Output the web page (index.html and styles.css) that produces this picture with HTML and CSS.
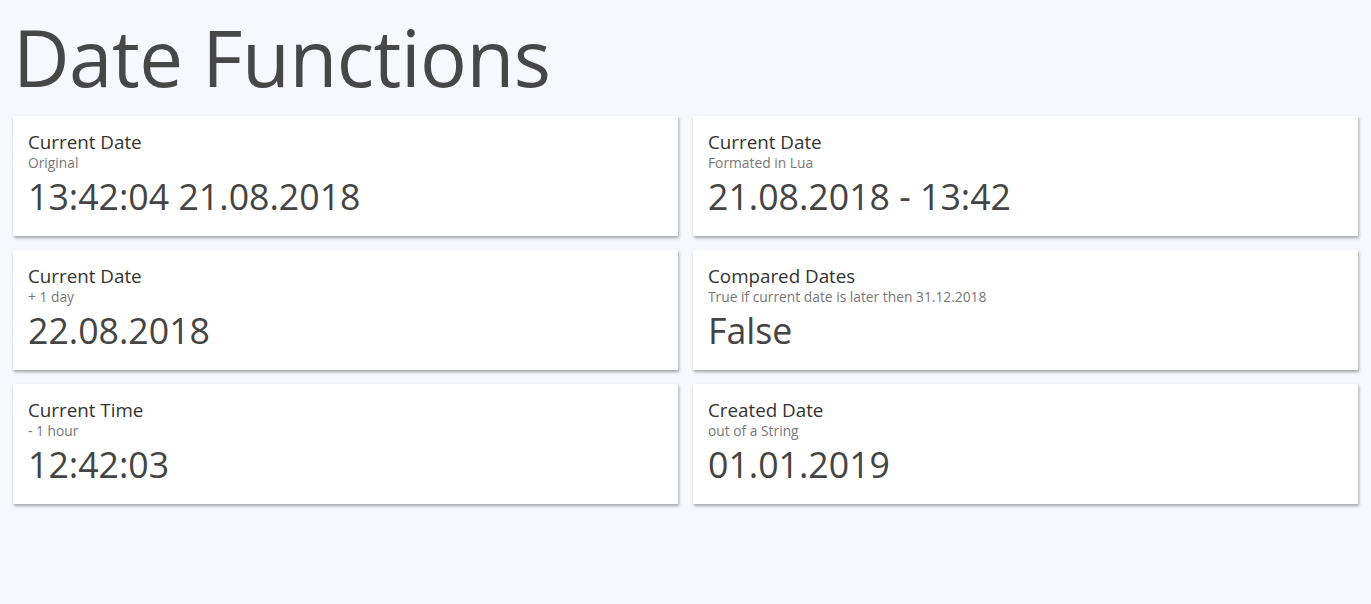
FILE: index.html
```html
<!DOCTYPE html>
<html>
<head>
<meta charset="utf-8">
<link rel="stylesheet" href="styles.css">
</head>
<body>
<h1 class="page-title">Date Functions</h1>
<div class="grid">
  <div class="card">
    <div class="card-title">Current Date</div>
    <div class="card-sub">Original</div>
    <div class="card-value">13:42:04 21.08.2018</div>
  </div>
  <div class="card">
    <div class="card-title">Current Date</div>
    <div class="card-sub">Formated in Lua</div>
    <div class="card-value">21.08.2018 - 13:42</div>
  </div>
  <div class="card">
    <div class="card-title">Current Date</div>
    <div class="card-sub">+ 1 day</div>
    <div class="card-value">22.08.2018</div>
  </div>
  <div class="card">
    <div class="card-title">Compared Dates</div>
    <div class="card-sub">True if current date is later then 31.12.2018</div>
    <div class="card-value">False</div>
  </div>
  <div class="card">
    <div class="card-title">Current Time</div>
    <div class="card-sub">- 1 hour</div>
    <div class="card-value">12:42:03</div>
  </div>
  <div class="card">
    <div class="card-title">Created Date</div>
    <div class="card-sub">out of a String</div>
    <div class="card-value">01.01.2019</div>
  </div>
</div>
</body>
</html>
```
FILE: styles.css
```css
html, body {
  margin: 0;
  padding: 0;
  background: #f7f8fd;
}
body {
  font-family: "Open Sans", "Noto Sans", sans-serif;
  color: #444;
  padding: 12px 13px 40px 13px;
}
.page-title {
  margin: 0;
  font-family: "Open Sans", sans-serif;
  font-weight: 400;
  font-size: 78px;
  line-height: 90px;
  letter-spacing: -0.5px;
  color: #474747;
  height: 104px;
}
.grid {
  display: grid;
  grid-template-columns: 665px 665px;
  column-gap: 15px;
  row-gap: 14px;
}
.card {
  background: #fff;
  height: 120px;
  box-sizing: border-box;
  padding: 14px 15px 0 15px;
  box-shadow: 1px 2px 3px rgba(0,0,0,0.35);
}
.card-title {
  font-size: 18.8px;
  line-height: 24px;
  color: #333;
}
.card-sub {
  font-size: 13.8px;
  line-height: 16px;
  margin-top: 1px;
  color: #777;
}
.card-value {
  font-size: 35.7px;
  line-height: 48px;
  margin-top: 1px;
  color: #444;
}
```
